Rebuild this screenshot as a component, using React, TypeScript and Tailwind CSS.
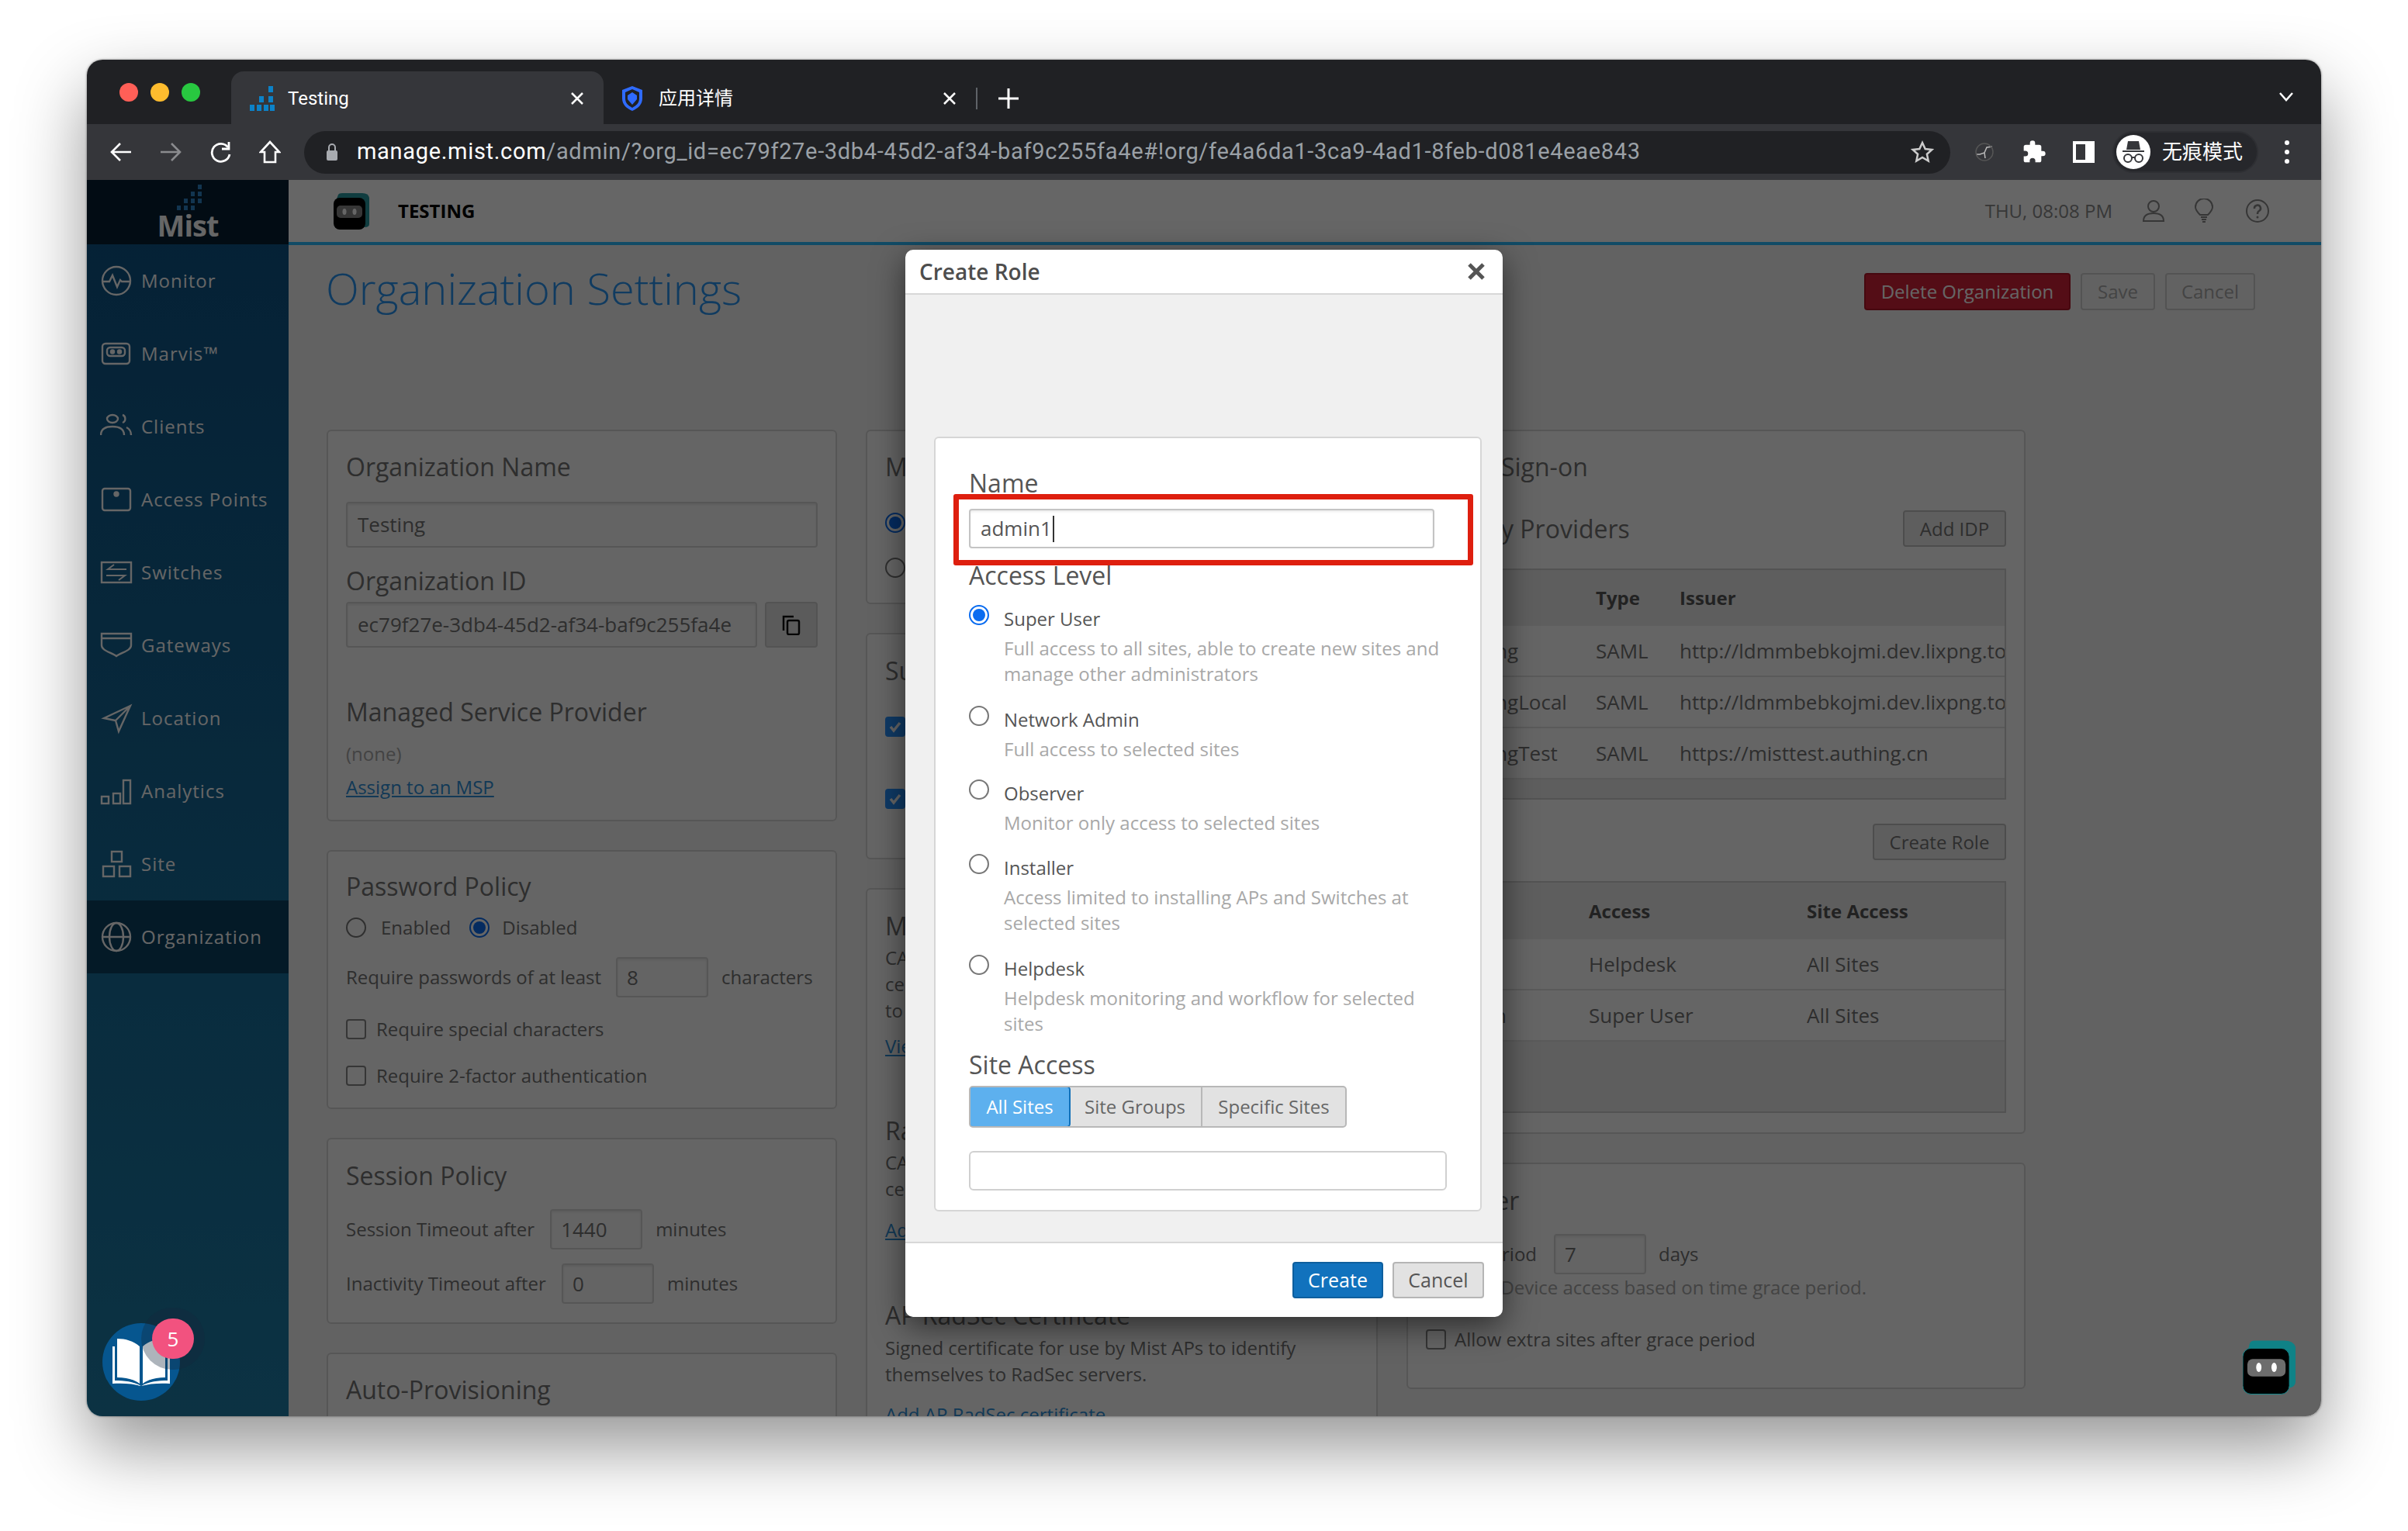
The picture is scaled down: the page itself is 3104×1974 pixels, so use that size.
import { ReactNode } from "react";

const navItems = [
  { label: "Monitor", icon: "monitor" },
  { label: "Marvis™", icon: "marvis" },
  { label: "Clients", icon: "clients" },
  { label: "Access Points", icon: "ap" },
  { label: "Switches", icon: "switches" },
  { label: "Gateways", icon: "gateways" },
  { label: "Location", icon: "location" },
  { label: "Analytics", icon: "analytics" },
  { label: "Site", icon: "site" },
  { label: "Organization", icon: "org" },
];

function NavIcon({ name }: { name: string }) {
  return (
    <svg width="42" height="42" viewBox="0 0 42 42" fill="none" stroke="#fff" strokeWidth="2.4">
      {name === "monitor" && (
        <>
          <circle cx="21" cy="21" r="18" />
          <path d="M4 22h8l4-8 6 15 4-9 2 2h10" />
        </>
      )}
      {name === "marvis" && (
        <>
          <rect x="3" y="8" width="35" height="26" rx="4" />
          <rect x="9" y="13" width="23" height="11" rx="4" />
          <circle cx="16" cy="18.500" r="2" fill="#fff" />
          <circle cx="25" cy="18.500" r="2" fill="#fff" />
        </>
      )}
      {name === "clients" && (
        <>
          <ellipse cx="16" cy="11" rx="7" ry="5" />
          <path d="M1 32c0-8 6-11 15-11s15 3 15 11" />
          <path d="M29 6c4 1 5 8 0 10M34 22c4 2 6 5 6 10" />
        </>
      )}
      {name === "ap" && (
        <>
          <rect x="3" y="7" width="36" height="28" rx="3" />
          <circle cx="21" cy="14" r="2.500" fill="#fff" />
        </>
      )}
      {name === "switches" && (
        <>
          <rect x="2" y="8" width="38" height="26" />
          <path d="M34 17H10l8-6M8 25h24l-8 6" strokeWidth="2" />
        </>
      )}
      {name === "gateways" && <path d="M2 6h38v15c0 7-12 9-19 14C14 30 2 28 2 21V6ZM2 12h38" />}
      {name === "location" && <path d="M39 5 5 21l15 3 4 14L39 5ZM39 5 20 24" />}
      {name === "analytics" && (
        <>
          <rect x="2" y="28" width="9" height="9" />
          <rect x="17" y="24" width="9" height="13" />
          <rect x="30" y="7" width="9" height="30" />
        </>
      )}
      {name === "site" && (
        <>
          <rect x="15" y="5" width="13" height="13" />
          <rect x="4" y="24" width="14" height="13" />
          <rect x="25" y="24" width="14" height="13" />
        </>
      )}
      {name === "org" && (
        <>
          <circle cx="21" cy="21" r="18" />
          <ellipse cx="21" cy="21" rx="9" ry="18" />
          <path d="M3 21h36" />
        </>
      )}
    </svg>
  );
}

function Robot({ width, height }: { width: number; height: number }) {
  return (
    <svg width={width} height={height} viewBox="0 0 70 70">
      <path d="M5 20 9 4Q10 0 16 0h38q12 0 15 8v46q0 6-8 8L5 64Z" fill="#0f8287" />
      <rect x="0" y="10" width="61" height="60" rx="11" fill="#000" stroke="#138a8e" strokeWidth="1" />
      <rect x="6" y="24" width="50" height="23" rx="7" fill="#6d6d6d" />
      <ellipse cx="21" cy="35" rx="3.500" ry="6" fill="#fff" />
      <ellipse cx="41" cy="35" rx="3.500" ry="6" fill="#fff" />
    </svg>
  );
}

function Radio({ checked }: { checked?: boolean }) {
  return checked ? (
    <span className="flex h-[26px] w-[26px] shrink-0 items-center justify-center rounded-full border-2 border-[#0a6cf0] bg-white">
      <span className="h-[16px] w-[16px] rounded-full bg-[#0a6cf0]" />
    </span>
  ) : (
    <span className="block h-[26px] w-[26px] shrink-0 rounded-full border-2 border-[#777] bg-white" />
  );
}

function Box({ checked }: { checked?: boolean }) {
  return (
    <span
      className={
        checked
          ? "flex h-[26px] w-[26px] shrink-0 items-center justify-center rounded-[4px] bg-[#2691ff] text-white"
          : "block h-[26px] w-[26px] shrink-0 rounded-[4px] border-2 border-[#888] bg-white"
      }
    >
      {checked && (
        <svg width="18" height="18" viewBox="0 0 18 18" fill="none" stroke="#fff" strokeWidth="3.500">
          <path d="m3 9 4 5 8-10" />
        </svg>
      )}
    </span>
  );
}

function Card({ className, children }: { className: string; children: ReactNode }) {
  return <div className={"rounded-[6px] border-2 border-[#d6d6d6] bg-[#fcfcfc] pl-[23px] " + className}>{children}</div>;
}

function Title({ className, children }: { className?: string; children: ReactNode }) {
  return <div className={"h-[40px] whitespace-nowrap text-[32px] leading-[40px] text-[#737373] " + (className ?? "")}>{children}</div>;
}

function Line({ className, children }: { className?: string; children: ReactNode }) {
  return <div className={"h-[34px] whitespace-nowrap text-[24px] leading-[34px] text-[#737373] " + (className ?? "")}>{children}</div>;
}

function SmallInput({ value, className }: { value: string; className: string }) {
  return (
    <div className={"flex h-[52px] w-[119px] items-center rounded-[4px] border-2 border-[#d8d8d8] bg-[#fafafa] pl-[12px] text-[26px] text-[#737373] shadow-[inset_0_2px_3px_rgba(0,0,0,0.08)] " + className}>
      {value}
    </div>
  );
}

function RoleOption({ label, lines, checked, className }: { label: string; lines: string[]; checked?: boolean; className?: string }) {
  return (
    <div className={"flex gap-[19px] " + (className ?? "")}>
      <div className="-mt-[1px] shrink-0">
        <Radio checked={checked} />
      </div>
      <div>
        <div className="h-[34px] text-[24px] leading-[34px] text-[#555]">{label}</div>
        <div className="mt-[4px] text-[24px] leading-[33px] text-[#a8a8a8]">
          {lines.map((l) => (
            <div key={l} className="h-[33px] whitespace-nowrap">{l}</div>
          ))}
        </div>
      </div>
    </div>
  );
}

function TableRow({ cols, a, b, c }: { cols: string; a: string; b: string; c: string }) {
  return (
    <div className={"grid h-[66px] items-center border-b-2 border-[#e0e0e0] bg-[#fcfcfc] text-[26px] text-[#737373] " + cols}>
      <div className="whitespace-nowrap pl-[23px]">{a}</div>
      <div className="whitespace-nowrap">{b}</div>
      <div className="overflow-hidden whitespace-nowrap">{c}</div>
    </div>
  );
}

export default function App() {
  return (
    <div className="relative h-[1974px] w-[3104px] overflow-hidden bg-white pl-[112px] pt-[77px] font-['Open_Sans','Noto_Sans_CJK_SC',sans-serif]">
      <div className="flex h-[1749px] w-[2880px] flex-col overflow-hidden rounded-[20px] shadow-[0_40px_90px_rgba(0,0,0,0.42),0_0_3px_rgba(0,0,0,0.5)]">
        {/* tab strip */}
        <div className="flex h-[83px] shrink-0 items-end bg-[#202124] pl-[42px] font-['Roboto','Noto_Sans_CJK_SC',sans-serif] text-white">
          <div className="mb-[29px] flex gap-[16px]">
            <span className="h-[24px] w-[24px] rounded-full bg-[#ff5f57]" />
            <span className="h-[24px] w-[24px] rounded-full bg-[#febc2e]" />
            <span className="h-[24px] w-[24px] rounded-full bg-[#28c840]" />
          </div>
          <div className="ml-[40px] flex h-[68px] w-[480px] items-center rounded-t-[16px] bg-[#35363a] pl-[24px] pt-[2px]">
            <svg width="32" height="32" viewBox="0 0 32 32" fill="#0c82c8">
              <rect x="0" y="24" width="6" height="8" />
              <rect x="9" y="24" width="6" height="8" />
              <rect x="18" y="24" width="6" height="8" />
              <rect x="26" y="24" width="6" height="8" />
              <rect x="12" y="13" width="6" height="8" />
              <rect x="24" y="13" width="6" height="8" />
              <rect x="24" y="0" width="6" height="8" />
            </svg>
            <span className="ml-[17px] text-[24px]">Testing</span>
            <svg className="ml-[285px]" width="18" height="18" viewBox="0 0 18 18" stroke="#fff" strokeWidth="2.500">
              <path d="m2 2 14 14M16 2 2 16" />
            </svg>
          </div>
          <div className="flex h-[68px] items-center pl-[22px] pt-[2px]">
            <svg width="30" height="32" viewBox="0 0 30 32" fill="#2f6bff">
              <path d="M15 0 28 5v11c0 8-6 13-13 16C8 29 2 24 2 16V5L15 0Zm0 4L6 8v8c0 6 4 9 9 12 5-3 9-6 9-12V8l-9-4Z" />
              <path d="m15 8 6 4v5l-6 7-6-7v-5l6-4Z" />
            </svg>
            <span className="ml-[19px] text-[24px]">应用详情</span>
            <svg className="ml-[270px]" width="18" height="18" viewBox="0 0 18 18" stroke="#fff" strokeWidth="2.500">
              <path d="m2 2 14 14M16 2 2 16" />
            </svg>
            <span className="ml-[25px] h-[28px] w-[2px] bg-[#5f6368]" />
            <svg className="ml-[27px]" width="26" height="26" viewBox="0 0 26 26" stroke="#fff" strokeWidth="3">
              <path d="M13 0v26M0 13h26" />
            </svg>
          </div>
          <svg className="mb-[28px] ml-[1624px]" width="20" height="14" viewBox="0 0 20 14" fill="none" stroke="#fff" strokeWidth="2.500">
            <path d="m2 2 8 9 8-9" />
          </svg>
        </div>

        {/* toolbar */}
        <div className="flex h-[72px] shrink-0 items-center bg-[#35363a] font-['Roboto','Noto_Sans_CJK_SC',sans-serif] text-white">
          <div className="ml-[30px] flex items-center">
            <svg width="28" height="28" viewBox="0 0 28 28" fill="none" stroke="#fff" strokeWidth="2.600">
              <path d="M27 14H3M13 3 2 14l11 11" />
            </svg>
            <svg className="ml-[36px]" width="28" height="28" viewBox="0 0 28 28" fill="none" stroke="#8a8b8e" strokeWidth="2.600">
              <path d="M1 14h24M15 3l11 11-11 11" />
            </svg>
            <svg className="ml-[36px]" width="28" height="28" viewBox="0 0 28 28" fill="none" stroke="#fff" strokeWidth="2.800">
              <path d="M24 8a11.500 11.500 0 1 0 2 9" />
              <path d="M25 1v9h-9" />
            </svg>
            <svg className="ml-[36px]" width="28" height="30" viewBox="0 0 28 30" fill="none" stroke="#fff" strokeWidth="2.600">
              <path d="M14 2 2 15h5v13h14V15h5L14 2Z" />
            </svg>
          </div>
          <div className="ml-[30px] flex h-[55px] w-[2122px] items-center rounded-full bg-[#202124] pl-[26px]">
            <svg width="20" height="24" viewBox="0 0 20 24" fill="#a8abb0">
              <rect x="3" y="10" width="14" height="13" rx="2" />
              <path d="M6 11V6a4 4 0 0 1 8 0v5" fill="none" stroke="#a8abb0" strokeWidth="2" />
            </svg>
            <span className="ml-[22px] whitespace-nowrap text-[29px] tracking-[0.68px]">
              manage.mist.com<span className="text-[#9aa0a6]">/admin/?org_id=ec79f27e-3db4-45d2-af34-baf9c255fa4e#!org/fe4a6da1-3ca9-4ad1-8feb-d081e4eae843</span>
            </span>
            <div className="flex-1" />
            <svg className="mr-[21px]" width="30" height="30" viewBox="0 0 30 30" fill="none" stroke="#ccc" strokeWidth="2.500">
              <path d="m15 3 3.700 8 8.600 1-6.400 5.800 1.800 8.700L15 22l-7.700 4.500 1.800-8.700L2.700 12l8.600-1L15 3Z" />
            </svg>
          </div>
          <svg className="ml-[30px]" width="28" height="28" viewBox="0 0 28 28" fill="none" stroke="#bbb" strokeWidth="1.500">
            <path d="M4 17h4l6-2 3-7 7-1M14 15l1 7" />
            <circle cx="14" cy="14" r="11" stroke="#555" />
          </svg>
          <svg className="ml-[34px]" width="32" height="32" viewBox="0 0 24 24" fill="#fff">
            <path d="M20.500 11H19V7a2 2 0 0 0-2-2h-4V3.500a2.500 2.500 0 0 0-5 0V5H4a2 2 0 0 0-2 2v3.800h1.500a2.700 2.700 0 0 1 0 5.400H2V20a2 2 0 0 0 2 2h3.800v-1.500a2.700 2.700 0 0 1 5.400 0V22H17a2 2 0 0 0 2-2v-4h1.500a2.500 2.500 0 0 0 0-5Z" />
          </svg>
          <div className="ml-[34px] h-[28px] w-[28px] border-[4px] border-r-[12px] border-white" />
          <div className="ml-[23px] flex h-[54px] w-[188px] items-center rounded-full border-2 border-[#2e2f33] bg-[#26272b] pl-[3px]">
            <svg width="44" height="44" viewBox="0 0 44 44">
              <circle cx="22" cy="22" r="22" fill="#fff" />
              <path d="M15 8h14l2 11H13l2-11ZM8 20h28v2H8Z" fill="#35363a" />
              <circle cx="15" cy="30" r="5" fill="none" stroke="#35363a" strokeWidth="2" />
              <circle cx="29" cy="30" r="5" fill="none" stroke="#35363a" strokeWidth="2" />
              <path d="M20 29h4" stroke="#35363a" strokeWidth="2" />
            </svg>
            <span className="ml-[15px] whitespace-nowrap text-[26px]">无痕模式</span>
          </div>
          <div className="ml-[34px] flex flex-col gap-[6px]">
            <span className="h-[6px] w-[6px] rounded-full bg-white" />
            <span className="h-[6px] w-[6px] rounded-full bg-white" />
            <span className="h-[6px] w-[6px] rounded-full bg-white" />
          </div>
        </div>

        {/* app */}
        <div className="relative flex h-[1594px] shrink-0 overflow-hidden">
          <aside className="flex w-[260px] shrink-0 flex-col bg-gradient-to-b from-[#0d5285] to-[#1e7ea8]">
            <div className="flex h-[83px] shrink-0 flex-col items-center justify-end bg-[#051e32] pb-[7px]">
              <svg width="38" height="40" viewBox="0 0 38 40" fill="#2d86c8" className="-mb-[6px] ml-[4px]">
                <rect x="30" y="0" width="5" height="6" />
                <rect x="30" y="9" width="5" height="6" />
                <rect x="21" y="9" width="5" height="6" />
                <rect x="30" y="18" width="5" height="6" />
                <rect x="21" y="18" width="5" height="6" />
                <rect x="12" y="18" width="5" height="6" />
                <rect x="21" y="27" width="5" height="6" />
                <rect x="12" y="27" width="5" height="6" />
                <rect x="3" y="27" width="5" height="6" />
              </svg>
              <span className="text-[38px] font-bold leading-[36px] tracking-[-1px] text-white">Mist</span>
            </div>
            {navItems.map((item) => (
              <div
                key={item.label}
                className={
                  item.label === "Organization"
                    ? "flex h-[94px] shrink-0 items-center bg-[#0c4162] pl-[17px] text-[24px] tracking-[1px] text-white"
                    : "flex h-[94px] shrink-0 items-center pl-[17px] text-[24px] tracking-[1px] text-white"
                }
              >
                <NavIcon name={item.icon} />
                <span className="ml-[11px] whitespace-nowrap">{item.label}</span>
              </div>
            ))}
          </aside>

          <main className="flex min-w-0 flex-1 flex-col bg-[#f6f6f6]">
            <header className="flex h-[84px] shrink-0 items-center border-b-[4px] border-[#2bbcff] bg-white pl-[58px] pr-[67px]">
              <svg width="46" height="47" viewBox="0 0 46 47">
                <path d="M3 10 6 2q1-2 5-2h26q8 0 9 6v34q0 4-6 4H3Z" fill="#2a9aa0" />
                <rect x="0" y="6" width="41" height="41" rx="8" fill="#000" />
                <rect x="4" y="16" width="33" height="16" rx="5" fill="#888" />
                <ellipse cx="14" cy="24" rx="2.500" ry="4" fill="#fff" />
                <ellipse cx="27" cy="24" rx="2.500" ry="4" fill="#fff" />
              </svg>
              <span className="ml-[37px] text-[24px] font-bold text-black">TESTING</span>
              <div className="flex-1" />
              <span className="text-[24px] text-[#8a8a8a]">THU, 08:08 PM</span>
              <svg className="ml-[39px]" width="28" height="30" viewBox="0 0 28 30" fill="none" stroke="#888" strokeWidth="2">
                <circle cx="14" cy="9" r="7" />
                <path d="M1 28c0-7 5-10 13-10s13 3 13 10H1Z" />
              </svg>
              <svg className="ml-[39px]" width="24" height="32" viewBox="0 0 24 32" fill="none" stroke="#888" strokeWidth="2">
                <path d="M7 21C2 16 1 13 1 11a11 11 0 0 1 22 0c0 2-1 5-6 10H7ZM8 24h8M9 27h6M10 30h4" />
              </svg>
              <svg className="ml-[42px]" width="30" height="30" viewBox="0 0 30 30" fill="none" stroke="#888" strokeWidth="2">
                <circle cx="15" cy="15" r="14" />
                <path d="M11 12a4 4 0 1 1 6 3c-2 1-2 2-2 4" strokeWidth="2.500" />
                <circle cx="15" cy="23" r="1.500" fill="#888" stroke="none" />
              </svg>
            </header>

            <div className="mt-[36px] flex h-[48px] shrink-0 items-center pl-[48px] pr-[85px]">
              <h1 className="mb-[10px] whitespace-nowrap text-[56px] font-light leading-[48px] text-[#2a94f0]">Organization Settings</h1>
              <div className="flex-1" />
              <button className="h-[48px] w-[266px] rounded-[4px] border-2 border-[#b01427] bg-[#d22137] text-[24px] text-white">Delete Organization</button>
              <button className="ml-[13px] h-[48px] w-[96px] rounded-[4px] border-2 border-[#cfcfcf] bg-[#f6f6f6] text-[24px] text-[#aaa]">Save</button>
              <button className="ml-[13px] h-[48px] w-[116px] rounded-[4px] border-2 border-[#cfcfcf] bg-[#f6f6f6] text-[24px] text-[#aaa]">Cancel</button>
            </div>

            <div className="mt-[154px] flex gap-[37px] pl-[49px]">
              {/* left column */}
              <div className="flex w-[658px] shrink-0 flex-col gap-[37px]">
                <Card className="h-[505px] pr-[23px] pt-[26px]">
                  <Title>Organization Name</Title>
                  <div className="mt-[25px] flex h-[59px] items-center rounded-[4px] border-2 border-[#d8d8d8] bg-[#fafafa] pl-[13px] text-[26px] text-[#737373] shadow-[inset_0_2px_3px_rgba(0,0,0,0.08)]">Testing</div>
                  <Title className="mt-[23px]">Organization ID</Title>
                  <div className="mt-[7px] flex gap-[10px]">
                    <div className="flex h-[59px] flex-1 items-center rounded-[4px] border-2 border-[#d8d8d8] bg-[#fafafa] pl-[13px] text-[26px] text-[#737373] shadow-[inset_0_2px_3px_rgba(0,0,0,0.08)]">ec79f27e-3db4-45d2-af34-baf9c255fa4e</div>
                    <div className="flex h-[59px] w-[68px] items-center justify-center rounded-[4px] border-2 border-[#d0d0d0] bg-[#e4e4e4]">
                      <svg width="24" height="26" viewBox="0 0 24 26" fill="none" stroke="#111" strokeWidth="2.500">
                        <path d="M2 20V2h13" />
                        <rect x="7" y="7" width="15" height="18" rx="2" />
                      </svg>
                    </div>
                  </div>
                  <Title className="mt-[63px]">Managed Service Provider</Title>
                  <Line className="mt-[17px] !text-[#a8a8a8]">(none)</Line>
                  <Line className="mt-[9px] !text-[#2e8fd8] underline">Assign to an MSP</Line>
                </Card>

                <Card className="h-[334px] pr-[23px] pt-[25px]">
                  <Title>Password Policy</Title>
                  <div className="mt-[16px] flex h-[34px] items-center">
                    <Radio />
                    <Line className="ml-[19px]">Enabled</Line>
                    <span className="ml-[24px]">
                      <Radio checked />
                    </span>
                    <Line className="ml-[16px]">Disabled</Line>
                  </div>
                  <div className="mt-[21px] flex items-center">
                    <Line>Require passwords of at least</Line>
                    <SmallInput value="8" className="ml-[19px]" />
                    <Line className="ml-[17px]">characters</Line>
                  </div>
                  <div className="mt-[24px] flex items-center gap-[13px]">
                    <Box />
                    <Line>Require special characters</Line>
                  </div>
                  <div className="mt-[26px] flex items-center gap-[13px]">
                    <Box />
                    <Line>Require 2-factor authentication</Line>
                  </div>
                </Card>

                <Card className="h-[240px] pr-[23px] pt-[27px]">
                  <Title>Session Policy</Title>
                  <div className="mt-[23px] flex items-center">
                    <Line>Session Timeout after</Line>
                    <SmallInput value="1440" className="ml-[20px]" />
                    <Line className="ml-[17px]">minutes</Line>
                  </div>
                  <div className="mt-[18px] flex items-center">
                    <Line>Inactivity Timeout after</Line>
                    <SmallInput value="0" className="ml-[20px]" />
                    <Line className="ml-[17px]">minutes</Line>
                  </div>
                </Card>

                <Card className="h-[200px] pr-[23px] pt-[26px]">
                  <Title>Auto-Provisioning</Title>
                </Card>
              </div>

              {/* middle column */}
              <div className="flex w-[660px] shrink-0 flex-col gap-[37px]">
                <Card className="h-[225px] pt-[26px]">
                  <Title>Mist Support</Title>
                  <div className="mt-[39px]"><Radio checked /></div>
                  <div className="mt-[32px]"><Radio /></div>
                </Card>
                <Card className="h-[292px] pt-[27px]">
                  <Title>Support Access</Title>
                  <div className="mt-[39px]"><Box checked /></div>
                  <div className="mt-[67px]"><Box checked /></div>
                </Card>
                <Card className="h-[720px] pt-[27px]">
                  <Title>Mist Certificate</Title>
                  <Line className="mt-[4px]">CA certificate</Line>
                  <Line>certificate</Line>
                  <Line>to</Line>
                  <Line className="mt-[12px] !text-[#2e8fd8] underline">View Certificate</Line>
                  <Title className="mt-[72px]">RadSec Certificates</Title>
                  <Line className="mt-[4px]">CA certificates</Line>
                  <Line>certificates</Line>
                  <Line className="mt-[19px] !text-[#2e8fd8] underline">Add certificate</Line>
                  <Title className="mt-[73px]">AP RadSec Certificate</Title>
                  <Line className="mt-[5px]">Signed certificate for use by Mist APs to identify</Line>
                  <Line>themselves to RadSec servers.</Line>
                  <Line className="mt-[18px] !text-[#2e8fd8] underline">Add AP RadSec certificate</Line>
                </Card>
              </div>

              {/* right column */}
              <div className="flex w-[798px] shrink-0 flex-col gap-[37px]">
                <Card className="h-[908px] pr-[23px] pt-[26px]">
                  <Title>Single Sign-on</Title>
                  <div className="mt-[36px] flex h-[47px] items-center justify-between">
                    <Title>Identity Providers</Title>
                    <button className="h-[47px] w-[133px] rounded-[4px] border-2 border-[#c0c0c0] bg-[#ececec] text-[24px] text-[#737373]">Add IDP</button>
                  </div>
                  <div className="mt-[28px] h-[298px] border-2 border-[#d0d0d0] bg-[#ececec]">
                    <div className="grid h-[72px] grid-cols-[217px_108px_1fr] items-center text-[24px] font-bold text-[#555]">
                      <div className="pl-[23px]">Name</div>
                      <div>Type</div>
                      <div>Issuer</div>
                    </div>
                    <TableRow cols="grid-cols-[217px_108px_1fr]" a="Authing" b="SAML" c="http://ldmmbebkojmi.dev.lixpng.top/oidc/saml" />
                    <TableRow cols="grid-cols-[217px_108px_1fr]" a="AuthingLocal" b="SAML" c="http://ldmmbebkojmi.dev.lixpng.top/oidc/saml" />
                    <TableRow cols="grid-cols-[217px_108px_1fr]" a="AuthingTest" b="SAML" c="https://misttest.authing.cn" />
                  </div>
                  <div className="mt-[31px] flex justify-end">
                    <button className="h-[47px] w-[172px] rounded-[4px] border-2 border-[#c0c0c0] bg-[#ececec] text-[24px] text-[#737373]">Create Role</button>
                  </div>
                  <div className="mt-[27px] h-[299px] border-2 border-[#d0d0d0] bg-[#ececec]">
                    <div className="grid h-[73px] grid-cols-[208px_281px_1fr] items-center text-[24px] font-bold text-[#555]">
                      <div className="pl-[23px]">Name</div>
                      <div>Access</div>
                      <div>Site Access</div>
                    </div>
                    <TableRow cols="grid-cols-[208px_281px_1fr]" a="Help" b="Helpdesk" c="All Sites" />
                    <TableRow cols="grid-cols-[208px_281px_1fr]" a="Admin" b="Super User" c="All Sites" />
                  </div>
                </Card>

                <Card className="h-[292px] pr-[23px] pt-[27px]">
                  <Title>Installer</Title>
                  <div className="mt-[23px] flex items-center">
                    <Line className="flex w-[143px] justify-end">Grace Period</Line>
                    <SmallInput value="7" className="ml-[22px]" />
                    <Line className="ml-[16px]">days</Line>
                  </div>
                  <Line className="!text-[#a8a8a8]">Installer Device access based on time grace period.</Line>
                  <div className="mt-[33px] flex items-center gap-[11px]">
                    <Box />
                    <Line>Allow extra sites after grace period</Line>
                  </div>
                </Card>
              </div>
            </div>
          </main>

          {/* modal backdrop */}
          <div className="absolute inset-0 bg-black/60" />

          <div className="absolute left-[20px] top-[1468px] h-[106px] w-[120px]">
            <div className="absolute left-0 top-[6px] flex h-[100px] w-[100px] items-center justify-center rounded-full bg-[#06568f]">
              <svg width="78" height="64" viewBox="0 0 78 64" fill="#fff">
                <path d="M37 12C29 5 19 2 8 2v50c11 0 21 2 29 8V12ZM41 12c8-7 18-10 29-10v50c-11 0-21 2-29 8V12Z" />
                <path d="M2 12h3v44c12 0 24 1 34 7-10-3-24-4-37-3V12ZM76 12h-3v44c-12 0-24 1-34 7 10-3 24-4 37-3V12Z" />
              </svg>
            </div>
            <div className="absolute left-[64px] top-0 flex h-[52px] w-[54px] items-center justify-center rounded-full bg-[#f2527f] text-[26px] text-white shadow-[0_0_0_14px_rgba(20,40,60,0.35)]">5</div>
          </div>

          <div className="absolute left-[2779px] top-[1496px]">
            <Robot width={69} height={70} />
          </div>

          <div className="absolute left-[1055px] top-[90px] flex h-[1376px] w-[770px] flex-col overflow-hidden rounded-[10px] bg-white shadow-[0_12px_40px_rgba(0,0,0,0.55)]">
            <div className="flex h-[58px] shrink-0 items-center justify-between border-b-2 border-[#d8d8d8] pl-[18px] pr-[22px]">
              <span className="text-[28px] font-semibold text-[#4d4d4d]">Create Role</span>
              <svg width="24" height="24" viewBox="0 0 24 24" stroke="#555" strokeWidth="5">
                <path d="m3 3 18 18M21 3 3 21" />
              </svg>
            </div>
            <div className="flex-1 bg-[#f0f0f0] pl-[37px] pt-[183px]">
              <div className="relative h-[999px] w-[706px] rounded-[6px] border-2 border-[#d6d6d6] bg-white pl-[43px] pt-[38px]">
                <div className="h-[40px] text-[32px] leading-[40px] text-[#555]">Name</div>
                <div className="mt-[13px] flex h-[51px] w-[600px] items-center rounded-[4px] border-2 border-[#c4c4c4] pl-[13px] text-[26px] text-[#555] shadow-[inset_0_2px_3px_rgba(0,0,0,0.08)]">
                  admin1<span className="ml-[1px] h-[34px] w-[2px] bg-[#333]" />
                </div>
                {/* annotation */}
                <div className="absolute left-[23px] top-[72px] h-[92px] w-[670px] rounded-[3px] border-[7px] border-[#de1f0f]" />
                <div className="mt-[15px] h-[40px] text-[32px] leading-[40px] text-[#555]">Access Level</div>
                <div className="mt-[19px]">
                  <RoleOption checked label="Super User" lines={["Full access to all sites, able to create new sites and", "manage other administrators"]} />
                  <RoleOption className="mt-[26px]" label="Network Admin" lines={["Full access to selected sites"]} />
                  <RoleOption className="mt-[24px]" label="Observer" lines={["Monitor only access to selected sites"]} />
                  <RoleOption className="mt-[25px]" label="Installer" lines={["Access limited to installing APs and Switches at", "selected sites"]} />
                  <RoleOption className="mt-[26px]" label="Helpdesk" lines={["Helpdesk monitoring and workflow for selected", "sites"]} />
                </div>
                <div className="mt-[17px] h-[40px] text-[32px] leading-[40px] text-[#555]">Site Access</div>
                <div className="mt-[7px] flex h-[54px] w-[487px] overflow-hidden rounded-[5px] border-2 border-[#b8b8b8] bg-[#e2e2e2] text-[24px] text-[#666]">
                  <div className="-m-[2px] flex w-[131px] items-center justify-center rounded-[5px] border-2 border-[#0f6fb8] bg-[#5db0ee] text-white">All Sites</div>
                  <div className="flex w-[172px] items-center justify-center border-r-2 border-[#b8b8b8]">Site Groups</div>
                  <div className="flex flex-1 items-center justify-center">Specific Sites</div>
                </div>
                <div className="mt-[30px] h-[51px] w-[616px] rounded-[6px] border-2 border-[#d0d0d0]" />
              </div>
            </div>
            <div className="flex h-[97px] shrink-0 items-start justify-end gap-[12px] border-t-2 border-[#d8d8d8] pr-[24px] pt-[24px]">
              <button className="h-[47px] w-[117px] rounded-[4px] border-2 border-[#0e5f9e] bg-[#1172bd] text-[25px] text-white">Create</button>
              <button className="h-[47px] w-[118px] rounded-[4px] border-2 border-[#b5b5b5] bg-[#e2e2e2] text-[25px] text-[#555]">Cancel</button>
            </div>
          </div>
        </div>
      </div>
    </div>
  );
}
